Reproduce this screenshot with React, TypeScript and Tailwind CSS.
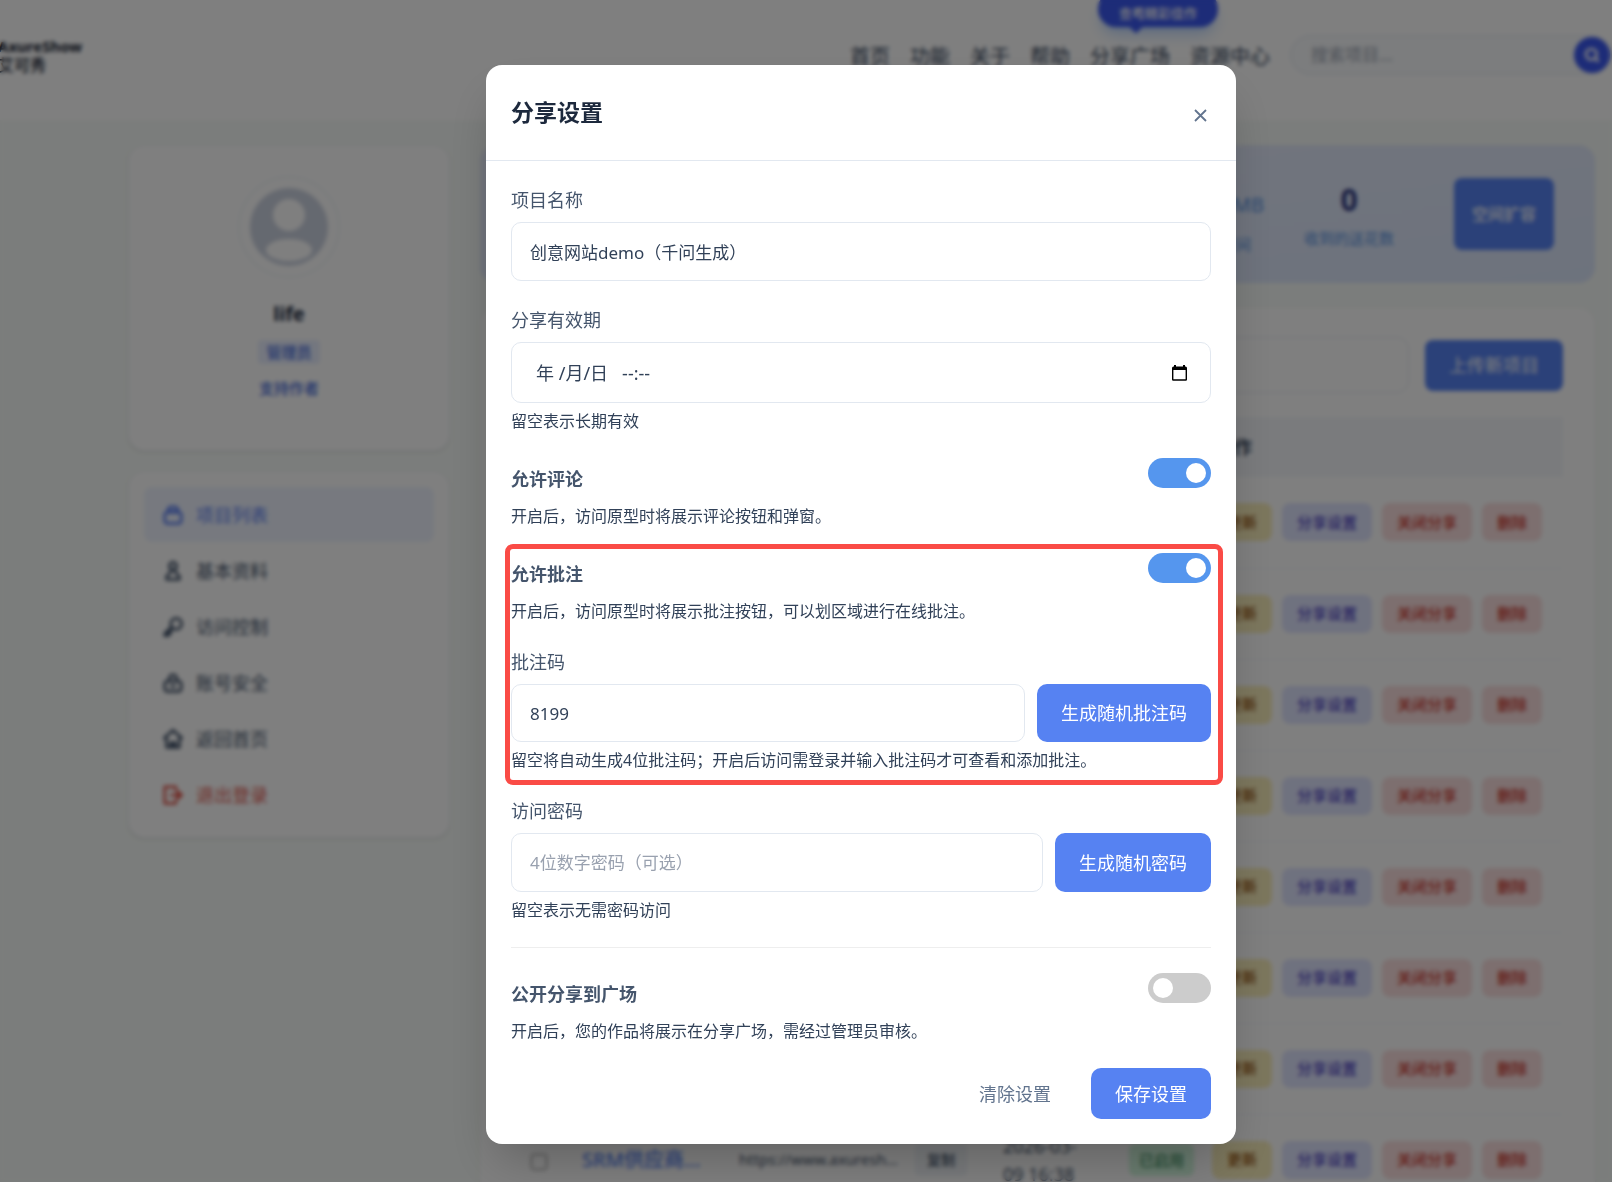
import { useState, type ReactNode } from "react";
import { Search } from "lucide-react";

const navLinks = ["首页", "功能", "关于", "帮助", "分享广场", "资源中心"];

const menuItems = [
  {
    label: "项目列表",
    tone: "bg-[#eef3ff] text-[#5b7ff0]",
    path: "M6.500 9.500V7a4 4 0 0 1 4-4h3a4 4 0 0 1 4 4v2.500M3 12a3 3 0 0 1 3-3h12a3 3 0 0 1 3 3v6a3 3 0 0 1-3 3H6a3 3 0 0 1-3-3zM7 10V8h10v2",
  },
  {
    label: "基本资料",
    tone: "text-slate-600",
    path: "M12 2.500a4 4 0 1 1 0 8 4 4 0 0 1 0-8zM10 10l-1 4-4 4v3h14v-3l-4-4-1-4",
  },
  {
    label: "访问控制",
    tone: "text-slate-600",
    path: "M15.500 2.500a6 6 0 1 1 0 12 6 6 0 0 1 0-12zM10.500 12L3 19v2.500h4V19h2.500v-3M11 13l-6 6",
  },
  {
    label: "账号安全",
    tone: "text-slate-600",
    path: "M8 10V7a4 4 0 0 1 8 0v3M3 13a3 3 0 0 1 3-3h12a3 3 0 0 1 3 3v5a3 3 0 0 1-3 3H6a3 3 0 0 1-3-3zM9 15.500h6",
  },
  {
    label: "返回首页",
    tone: "text-slate-600",
    path: "M12 2.500L2.500 11h2.500v10h14V11h2.500zM9.500 20v-4h5v4M12 17v3",
  },
  {
    label: "退出登录",
    tone: "text-[#e05a50]",
    path: "M15 7V3H3v18h12v-4M9 12h12M17 8l4.500 4-4.500 4z",
  },
];

const projectIds = [1, 2, 3, 4, 5, 6, 7, 8];

const rowActions = [
  { label: "更新", tone: "bg-[#f9eebb] text-[#92500e]" },
  { label: "分享设置", tone: "bg-[#dfe4ff] text-[#4a3fc0]" },
  { label: "关闭分享", tone: "bg-[#fadede] text-[#c8352c]" },
  { label: "删除", tone: "bg-[#fadede] text-[#c8352c]" },
];

const inputClass =
  "block w-full min-w-0 rounded-[10px] border border-slate-200 bg-white px-[18px] text-[17px] text-slate-700 placeholder:text-gray-400 outline-none focus:border-blue-400";

const primaryButton =
  "shrink-0 rounded-[10px] bg-[#5682f2] px-6 text-lg text-white hover:bg-[#4874e8]";

function Header() {
  return (
    <header className="flex h-[120px] items-start justify-between bg-white">
      <div className="-ml-[2px] pt-9 text-slate-900">
        <div className="text-[15px] font-bold leading-5">AxureShow</div>
        <div className="text-base font-medium leading-[18px]">艾可秀</div>
      </div>
      <div className="flex items-center gap-5 pt-[35px]">
        <nav className="flex gap-5 pt-1 text-xl text-slate-700">
          {navLinks.map((label) => (
            <a key={label} href="#" className="relative">
              {label}
              {label === "分享广场" && (
                <span className="absolute -top-[52px] left-2 flex h-9 w-[120px] items-end justify-center rounded-full bg-[#3a58f0] pb-1 text-[13px] font-medium leading-5 text-white shadow-lg shadow-blue-500/30">
                  查看精彩佳作
                  <span className="absolute -bottom-1 left-8 size-3 rotate-45 bg-[#3a58f0]" />
                </span>
              )}
            </a>
          ))}
        </nav>
        <div className="flex h-10 w-[322px] items-center rounded-full border border-slate-200 bg-slate-50 pl-5 pr-px">
          <input
            aria-label="搜索项目"
            placeholder="搜索项目..."
            className="min-w-0 flex-1 bg-transparent text-[17px] placeholder:text-gray-400"
          />
          <button
            aria-label="搜索"
            className="flex size-9 items-center justify-center rounded-full bg-[#3a58f0] text-white"
          >
            <Search className="size-4" strokeWidth={4} />
          </button>
        </div>
      </div>
    </header>
  );
}

function Sidebar() {
  return (
    <aside className="flex w-[322px] shrink-0 flex-col gap-5">
      <div className="flex h-[306px] flex-col items-center rounded-2xl border border-slate-100 bg-white pt-[30px] shadow-sm">
        <div className="flex size-[102px] items-center justify-center rounded-full border-2 border-slate-100">
          <svg viewBox="0 0 78 78" aria-hidden="true" className="size-[78px]">
            <circle cx="39" cy="39" r="39" fill="#cbd2e0" />
            <circle cx="39" cy="27" r="16" fill="#fff" />
            <ellipse cx="39" cy="62" rx="23" ry="11" fill="#fff" />
          </svg>
        </div>
        <div className="mt-[22px] text-xl font-bold leading-7 text-slate-800">life</div>
        <span className="mt-3 rounded bg-[#e8eeff] px-2 text-[15px] font-medium leading-6 text-[#3f66d8]">
          管理员
        </span>
        <a href="#" className="mt-3 text-[15px] font-medium leading-6 text-[#3f66d8]">
          支持作者
        </a>
      </div>
      <nav className="flex flex-col gap-px rounded-2xl border border-slate-100 bg-white p-[15px] shadow-sm">
        {menuItems.map(({ label, tone, path }) => (
          <a
            key={label}
            href="#"
            className={`flex h-[55px] items-center gap-3 rounded-lg px-[18px] text-lg ${tone}`}
          >
            <svg
              viewBox="0 0 24 24"
              aria-hidden="true"
              className="size-[22px]"
              fill="none"
              stroke="currentColor"
              strokeWidth="3"
              strokeLinejoin="round"
            >
              <path d={path} />
            </svg>
            {label}
          </a>
        ))}
      </nav>
    </aside>
  );
}

function Stats() {
  return (
    <section className="flex h-[138px] items-center justify-end gap-[60px] rounded-2xl bg-gradient-to-br from-[#e6ebfa] to-[#dbe6fb] pr-[41px]">
      <div className="flex gap-10 pt-[10px] text-center text-[15px] text-[#5590e0]">
        <div>
          <div className="leading-9">
            <span className="text-[32px] font-bold text-[#2b3680]">500</span>
            <span className="text-xl">MB</span>
          </div>
          <div className="mt-2 leading-6">剩余空间</div>
        </div>
        <div>
          <div className="text-[30px] font-bold leading-9 text-[#2b3680]">0</div>
          <div className="mt-2 leading-6">收到的送花数</div>
        </div>
      </div>
      <button className="h-[72px] w-[100px] rounded-lg bg-[#5682f2] text-base font-medium text-white">
        空间扩容
      </button>
    </section>
  );
}

function ProjectTable() {
  return (
    <section className="rounded-2xl bg-white px-8 pt-[29px] shadow-sm">
      <div className="flex items-center gap-4">
        <input
          aria-label="搜索"
          className="h-14 min-w-0 flex-1 rounded-xl border border-slate-200"
        />
        <button className="h-[51px] rounded-lg bg-[#5682f2] px-6 text-lg text-white">
          上传新项目
        </button>
      </div>
      <table className="mt-6 w-full table-fixed text-left text-lg text-slate-600">
        <thead>
          <tr className="h-[60px] bg-[#f5f7fb] font-bold text-slate-700">
            <th className="w-[54px]" />
            <th className="w-[157px]">项目</th>
            <th className="w-[264px]">链接</th>
            <th className="w-[126px]">时间</th>
            <th className="w-[99px]">状态</th>
            <th className="pl-1">操作</th>
          </tr>
        </thead>
        <tbody>
          {projectIds.map((id) => (
            <tr key={id} className="h-[91px] border-b border-slate-100">
              <td className="text-center">
                <input type="checkbox" aria-label="选择项目" className="size-4 align-middle" />
              </td>
              <td className="pl-4">
                <a href="#" className="text-xl font-medium text-[#5682f2]">
                  SRM供应商...
                </a>
              </td>
              <td className="pl-4">
                <div className="flex items-center gap-4">
                  <span className="w-40 truncate text-[15px]">https://www.axureshow.com</span>
                  <button className="rounded bg-slate-100 px-3 text-sm font-medium leading-8">
                    复制
                  </button>
                </div>
              </td>
              <td className="pl-4 pr-6">2026-03-09 16:38</td>
              <td className="pl-4">
                <span className="inline-block rounded-md bg-[#d3f8df] px-[10px] text-[15px] leading-8 text-[#217a48]">
                  已启用
                </span>
              </td>
              <td>
                <div className="flex gap-[10px]">
                  {rowActions.map((action) => (
                    <button
                      key={action.label}
                      className={`h-[38px] shrink-0 rounded-lg px-[15px] text-[15px] font-medium ${action.tone}`}
                    >
                      {action.label}
                    </button>
                  ))}
                </div>
              </td>
            </tr>
          ))}
        </tbody>
      </table>
    </section>
  );
}

function CalendarIcon() {
  return (
    <svg viewBox="0 0 15 16" aria-hidden="true" className="h-4 w-[15px]" fill="currentColor">
      <path
        fillRule="evenodd"
        d="M2 0h2v1.500h7V0h2v1.500h.5A1.500 1.500 0 0 1 15 3v11.500a1.200 1.200 0 0 1-1.200 1.200H1.200A1.200 1.200 0 0 1 0 14.500V3a1.500 1.500 0 0 1 1.500-1.500H2zM1.400 5v9.300h12.200V5z"
      />
    </svg>
  );
}

function Label({ htmlFor, children }: { htmlFor: string; children: ReactNode }) {
  return (
    <label htmlFor={htmlFor} className="mb-2 block text-lg leading-7 text-slate-600">
      {children}
    </label>
  );
}

function Hint({ children }: { children: ReactNode }) {
  return <p className="mt-[6px] text-base leading-6 text-slate-700">{children}</p>;
}

function ToggleRow({
  id,
  title,
  description,
  defaultOn = false,
}: {
  id: string;
  title: string;
  description: string;
  defaultOn?: boolean;
}) {
  const [on, setOn] = useState(defaultOn);

  return (
    <div className="flex items-start justify-between">
      <div className="pt-[7px]">
        <label htmlFor={id} className="block text-lg font-bold leading-7 text-slate-600">
          {title}
        </label>
        <p className="mt-[11px] text-base leading-6 text-slate-700">{description}</p>
      </div>
      <input
        id={id}
        type="checkbox"
        role="switch"
        checked={on}
        onChange={(e) => setOn(e.target.checked)}
        className="flex h-[30px] w-[63px] shrink-0 cursor-pointer appearance-none items-center rounded-full bg-[#ccc] px-[5px] before:size-5 before:rounded-full before:bg-white checked:justify-end checked:bg-[#5596ee]"
      />
    </div>
  );
}

function ShareDialog() {
  const [name, setName] = useState("创意网站demo（千问生成）");
  const [expiry, setExpiry] = useState("年 /月/日\u00a0\u00a0\u00a0--:--");
  const [code, setCode] = useState("8199");
  const [password, setPassword] = useState("");

  return (
    <div
      role="dialog"
      aria-modal="true"
      aria-labelledby="share-title"
      className="w-full max-w-[750px] rounded-2xl bg-white shadow-2xl"
    >
      <div className="flex h-24 items-center justify-between border-b border-slate-200 px-[25px]">
        <h2 id="share-title" className="text-[23px] font-bold text-slate-800">
          分享设置
        </h2>
        <button aria-label="关闭" className="p-1 pt-[10px] text-slate-500">
          <svg viewBox="0 0 13 13" aria-hidden="true" className="size-[13px]">
            <path d="M1 1l11 11M12 1L1 12" stroke="currentColor" strokeWidth="1.800" />
          </svg>
        </button>
      </div>

      <form className="flex flex-col gap-[25px] p-[25px]" onSubmit={(e) => e.preventDefault()}>
        <div>
          <Label htmlFor="name">项目名称</Label>
          <input
            id="name"
            value={name}
            onChange={(e) => setName(e.target.value)}
            className={`${inputClass} h-[59px]`}
          />
        </div>

        <div>
          <Label htmlFor="expiry">分享有效期</Label>
          <div className="flex h-[61px] items-center rounded-[10px] border border-slate-200 pl-6 pr-[23px]">
            <input
              id="expiry"
              value={expiry}
              onChange={(e) => setExpiry(e.target.value)}
              className="min-w-0 flex-1 text-lg text-slate-700 outline-none"
            />
            <button type="button" aria-label="选择日期" className="text-black">
              <CalendarIcon />
            </button>
          </div>
          <Hint>留空表示长期有效</Hint>
        </div>

        <ToggleRow
          id="comments"
          title="允许评论"
          description="开启后，访问原型时将展示评论按钮和弹窗。"
          defaultOn
        />

        <div className="relative flex flex-col gap-[25px]">
          <ToggleRow
            id="annotations"
            title="允许批注"
            description="开启后，访问原型时将展示批注按钮，可以划区域进行在线批注。"
            defaultOn
          />
          <div>
            <Label htmlFor="code">批注码</Label>
            <div className="flex gap-3">
              <input
                id="code"
                value={code}
                onChange={(e) => setCode(e.target.value)}
                className={`${inputClass} h-[58px]`}
              />
              <button type="button" className={primaryButton}>
                生成随机批注码
              </button>
            </div>
            <Hint>留空将自动生成4位批注码；开启后访问需登录并输入批注码才可查看和添加批注。</Hint>
          </div>
          <div className="pointer-events-none absolute -bottom-[13px] -left-[6px] -right-3 -top-[9px] rounded-lg border-[5px] border-[#fa4b46]" />
        </div>

        <div>
          <Label htmlFor="password">访问密码</Label>
          <div className="flex gap-3">
            <input
              id="password"
              placeholder="4位数字密码（可选）"
              value={password}
              onChange={(e) => setPassword(e.target.value)}
              className={`${inputClass} h-[59px]`}
            />
            <button type="button" className={primaryButton}>
              生成随机密码
            </button>
          </div>
          <Hint>留空表示无需密码访问</Hint>
        </div>

        <hr className="border-[#eee]" />

        <ToggleRow
          id="public"
          title="公开分享到广场"
          description="开启后，您的作品将展示在分享广场，需经过管理员审核。"
        />

        <div className="flex h-[51px] justify-end gap-4">
          <button type="button" className="px-6 text-lg text-slate-500">
            清除设置
          </button>
          <button type="submit" className={primaryButton}>
            保存设置
          </button>
        </div>
      </form>
    </div>
  );
}

export default function App() {
  return (
    <div className="h-screen overflow-hidden bg-[#f7fbf8] font-['Noto_Sans','Noto_Sans_CJK_SC',sans-serif]">
      <Header />
      <main className="flex gap-[30px] pl-32 pr-[17px] pt-[25px]">
        <Sidebar />
        <div className="flex min-w-0 flex-1 flex-col gap-[25px]">
          <Stats />
          <ProjectTable />
        </div>
      </main>
      <div className="fixed inset-0 flex items-start justify-center overflow-hidden bg-black/50 pl-[110px] pt-[65px] backdrop-blur-[2px]">
        <ShareDialog />
      </div>
    </div>
  );
}
